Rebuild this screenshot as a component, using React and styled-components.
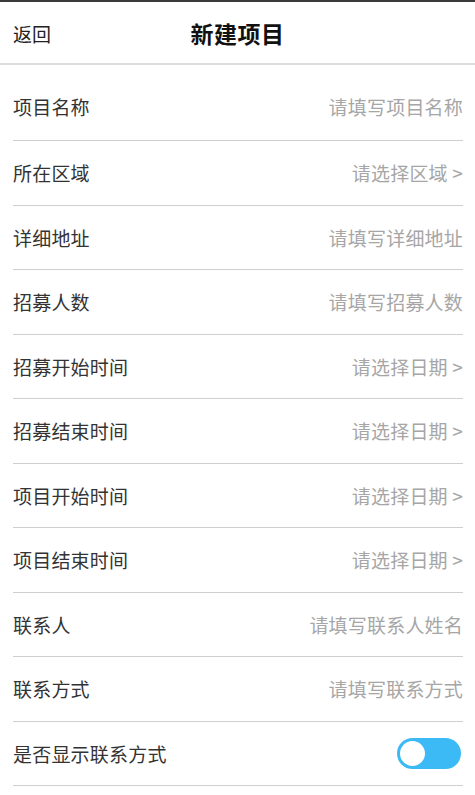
import styled, { createGlobalStyle } from "styled-components";

const GlobalStyle = createGlobalStyle`
  * { box-sizing: border-box; }
  body {
    margin: 0;
    background: #fff;
    font-family: "Noto Sans CJK SC", "Noto Sans", sans-serif;
  }
`;

// styles
const Page = styled.div`
  width: 475px;
  min-height: 795px;
  border-top: 2px solid #3a3a3a;
  background: #fff;
`;

const Header = styled.div`
  height: 63px;
  display: flex;
  align-items: center;
  justify-content: center;
  position: relative;
  border-bottom: 2px solid #dcdcdc;
`;

const Back = styled.span`
  position: absolute;
  left: 13px;
  top: 50%;
  transform: translateY(-50%);
  font-size: 19px;
  color: #222;
`;

const Title = styled.h1`
  margin: 0;
  font-size: 23px;
  font-weight: 700;
  color: #111;
  letter-spacing: 0.5px;
`;

const List = styled.div`
  padding: 0 12px 0 13px;
`;

const Row = styled.div`
  height: ${(props) => (props.first ? "76px" : "64.5px")};
  padding-top: ${(props) => (props.first ? "8px" : "0")};
  display: flex;
  align-items: center;
  justify-content: space-between;
  border-bottom: 1.5px solid #cfcfcf;
`;

const Label = styled.span`
  font-size: 19px;
  letter-spacing: 0.2px;
  color: #333;
`;

const Value = styled.span`
  font-size: 19px;
  letter-spacing: 0.2px;
  color: #a6a6a6;
`;

const Toggle = styled.div`
  width: 64px;
  height: 31px;
  border-radius: 16px;
  background: #3cbaf6;
  position: relative;
  margin-right: 2px;
`;

const Knob = styled.div`
  position: absolute;
  left: 1px;
  top: 1px;
  width: 29px;
  height: 29px;
  border-radius: 50%;
  background: #fff;
  border: 2px solid #3cbaf6;
`;

const fields = [
  ["项目名称", "请填写项目名称"],
  ["所在区域", "请选择区域 >"],
  ["详细地址", "请填写详细地址"],
  ["招募人数", "请填写招募人数"],
  ["招募开始时间", "请选择日期 >"],
  ["招募结束时间", "请选择日期 >"],
  ["项目开始时间", "请选择日期 >"],
  ["项目结束时间", "请选择日期 >"],
  ["联系人", "请填写联系人姓名"],
  ["联系方式", "请填写联系方式"],
];

const App = () => {
  return (
    <Page>
      <GlobalStyle />
      <Header>
        <Back>返回</Back>
        <Title>新建项目</Title>
      </Header>
      <List>
        {fields.map(([label, value], i) => (
          <Row key={label} first={i === 0}>
            <Label>{label}</Label>
            <Value>{value}</Value>
          </Row>
        ))}
        <Row>
          <Label>是否显示联系方式</Label>
          <Toggle>
            <Knob />
          </Toggle>
        </Row>
      </List>
    </Page>
  );
};

export default App;
